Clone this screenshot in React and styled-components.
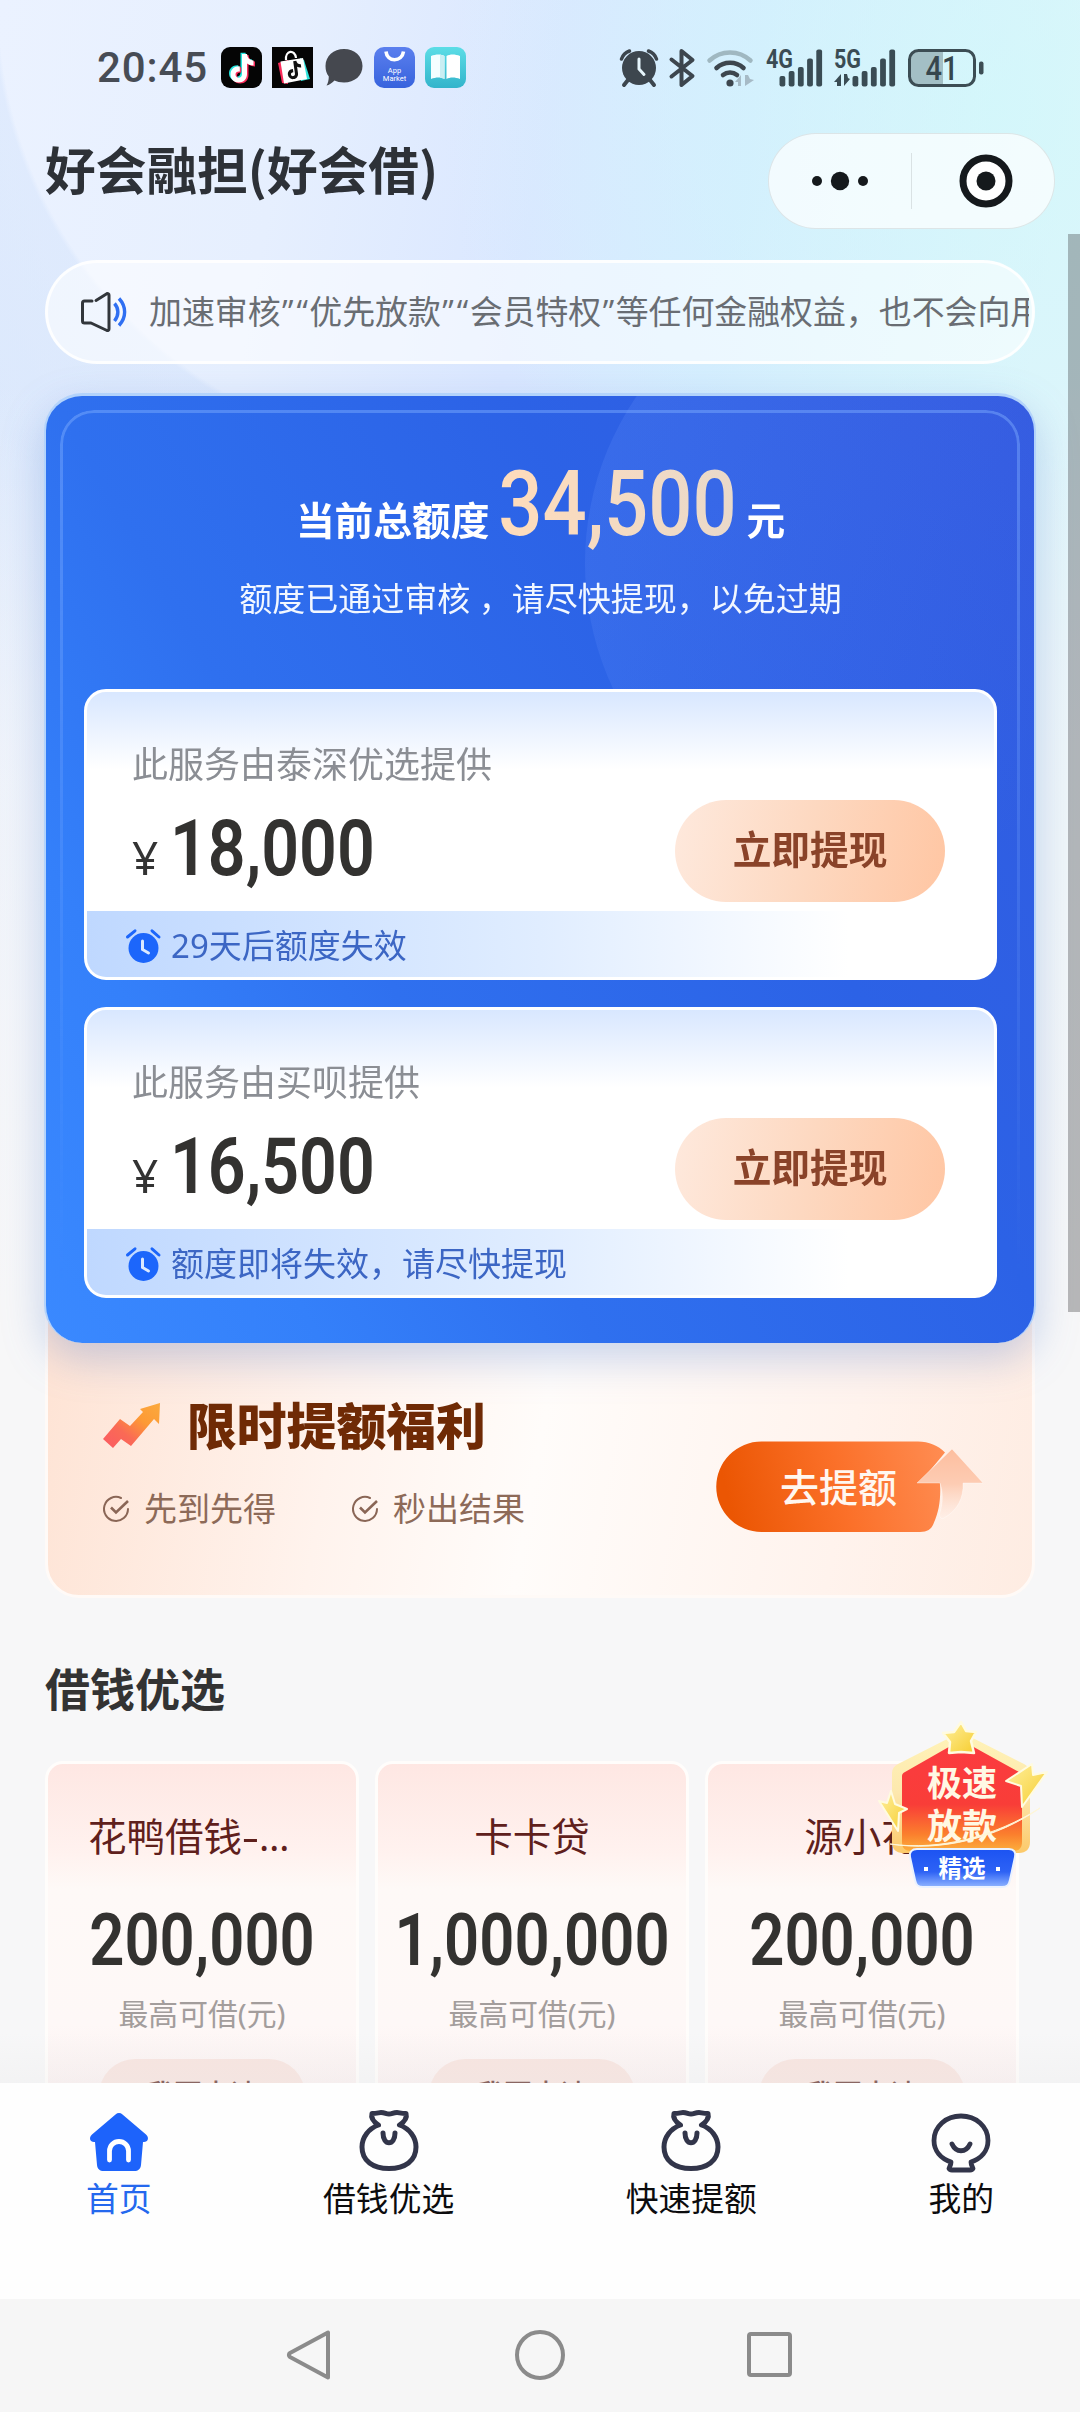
import React from "react";
import styled, { createGlobalStyle } from "styled-components";

const cjk = `"Noto Sans", "Noto Sans CJK SC", sans-serif`;

const GlobalStyle = createGlobalStyle`
  * { box-sizing: border-box; }
  body { margin: 0; font-family: ${cjk}; color: #333; }
  svg { display: block; flex: none; overflow: visible; }
`;

const Screen = styled.div`
  position: relative;
  width: 1080px;
  height: 2412px;
  overflow: hidden;
  display: flex;
  flex-direction: column;
  background:
    linear-gradient(180deg, rgba(247, 247, 248, 0) 0, rgba(247, 247, 248, 0) 380px, rgba(247, 247, 248, 0.6) 760px, #f7f7f8 1300px),
    radial-gradient(circle 900px at 454px -2px, transparent 456px, rgba(202, 221, 250, 0.34) 461px, rgba(206, 224, 250, 0.5) 620px, rgba(206, 224, 250, 0.2) 900px) no-repeat 0 0 / 440px 1000px,
    radial-gradient(circle 560px at 1000px 110px, rgba(206, 249, 250, 0.66), rgba(208, 247, 251, 0.42) 50%, rgba(210, 240, 255, 0)),
    linear-gradient(100deg, #ebf2ff 0, #e6effe 300px, #dae7ff 560px, #d6ebff 760px, #e2f4fb 1080px);
`;

const StatusBar = styled.div`
  flex: none;
  display: flex;
  align-items: center;
  height: 88px;
  padding: 47px 95px 0 97px;
`;

const Clock = styled.div`
  width: 124px;
  font: 500 42px/41px Roboto, sans-serif;
  letter-spacing: 0.9px;
  color: #474c55;
  white-space: nowrap;
`;

const AppIcons = styled.div`
  display: flex;
  align-items: center;
  gap: 10px;
  flex: 1;
`;

const StatusIcons = styled.div`
  display: flex;
  align-items: center;
  gap: 12px;
`;

const Header = styled.header`
  flex: none;
  display: flex;
  justify-content: space-between;
  align-items: center;
  padding: 45px 25px 0 45px;
`;

const Title = styled.h1`
  margin: 0 0 26px;
  font: 700 50.700px/56px "Noto Sans CJK SC", sans-serif;
  color: #2d3137;
`;

const Capsule = styled.div`
  display: flex;
  align-items: center;
  width: 287px;
  height: 96px;
  border: 1px solid rgba(0, 0, 0, 0.09);
  border-radius: 48px;
  background: rgba(255, 255, 255, 0.7);
`;

const CapsulePart = styled.div`
  display: flex;
  align-items: center;
  justify-content: center;
  width: 142px;
  height: 56px;
  & + & {
    width: 143px;
    padding-left: 6px;
    border-left: 1px solid rgba(0, 0, 0, 0.1);
  }
`;

const Content = styled.main`
  flex: 1;
  min-height: 0;
  overflow: hidden;
  padding: 31px 45px 0;
  display: flex;
  flex-direction: column;
`;

const Notice = styled.div`
  flex: none;
  display: flex;
  align-items: center;
  height: 104px;
  padding: 0 3px 0 33px;
  border: 3px solid rgba(255, 255, 255, 0.85);
  border-radius: 52px;
  background: rgba(255, 255, 255, 0.55);
`;

const NoticeText = styled.div`
  flex: 1;
  margin-left: 22px;
  overflow: hidden;
  white-space: nowrap;
  font-size: 32.9px;
  line-height: 48px;
  color: #696d73;
`;

const Quote = styled.span`
  display: inline-block;
  width: 14.4px;
  text-align: center;
  font-family: "Open Sans", sans-serif;
`;

const QuotaCard = styled.section`
  flex: none;
  position: relative;
  z-index: 1;
  height: 950px;
  margin-top: 29px;
  margin-right: -1px;
  margin-left: -1px;
  padding: 64px 37px 0 38px;
  border: solid #b3d3fb;
  border-width: 3px 2px 0;
  border-radius: 38px;
  overflow: hidden;
  background: linear-gradient(60deg, #3a89ff 0, #3480fa 18%, #2f70ef 36%, #2c62e6 66%, #335adf 100%);

  &::before {
    content: "";
    position: absolute;
    left: 539px;
    top: -128px;
    width: 590px;
    height: 590px;
    border-radius: 50%;
    background: linear-gradient(110deg, rgba(100, 146, 250, 0.24), rgba(94, 130, 250, 0.1) 55%, rgba(94, 130, 250, 0) 80%);
  }
`;

const CardShadow = styled.div`
  flex: none;
  position: relative;
  z-index: 1;
  margin-bottom: -60px;
  border-radius: 38px;
  filter: drop-shadow(0 16px 20px rgba(62, 110, 200, 0.28));
`;

const InnerFrame = styled.div`
  position: absolute;
  inset: 14px 14px 60px;
  border: 3px solid rgba(130, 175, 255, 0.45);
  border-bottom: 0;
  border-radius: 34px 34px 0 0;
  mask-image: linear-gradient(180deg, #000, rgba(0, 0, 0, 0.5) 50%, transparent);
`;

const QuotaTotal = styled.div`
  position: relative;
  display: flex;
  align-items: baseline;
  justify-content: center;
  height: 92px;
  font-size: 38.7px;
  line-height: 90px;
  font-weight: 700;
  color: #fff;
`;

const Digits = styled.span`
  display: inline-flex;
  justify-content: ${(p) => p.$align || "center"};
  width: ${(p) => p.$width}px;
  font: ${(p) => p.$weight || 500} ${(p) => p.$size}px / ${(p) => p.$size}px Roboto, sans-serif;
  color: ${(p) => p.$color || "#333230"};
  white-space: nowrap;
  transform: scaleX(${(p) => p.$squeeze});
  transform-origin: ${(p) => p.$origin || "center"};
`;

const TotalAmount = styled(Digits)`
  margin: 0 11px 0 11px;
  & > span {
    background: linear-gradient(90deg, #ffdcbb, #e9d9ca);
    background-clip: text;
    color: transparent;
  }
`;

const QuotaHint = styled.p`
  position: relative;
  margin: 23px 0 0;
  text-align: center;
  white-space: nowrap;
  font-size: 33px;
  line-height: 48px;
  color: #f2f7ff;
`;

const OfferList = styled.div`
  position: relative;
  display: flex;
  flex-direction: column;
  gap: 27px;
  margin-top: 66px;
`;

const Offer = styled.article`
  display: flex;
  flex-direction: column;
  height: 291px;
  border: 3px solid #fff;
  border-radius: 22px;
  overflow: hidden;
  background: linear-gradient(180deg, #d8e7ff 0, #eff5ff 45px, #fff 78px);
`;

const OfferBody = styled.div`
  flex: 1;
  display: flex;
  justify-content: space-between;
  padding: 49px 49px 0 45px;
`;

const Provider = styled.div`
  font-size: 36px;
  line-height: 48px;
  color: #8b8e94;
`;

const Amount = styled.div`
  display: flex;
  align-items: baseline;
  margin-top: 22px;
  font-size: 44px;
  line-height: 77px;
  color: #333;
`;

const Yen = styled.span`
  width: 38px;
  font: 400 46px/77px "Noto Sans", sans-serif;
`;

const CashButton = styled.button`
  width: 270px;
  height: 102px;
  margin-top: 59px;
  padding: 0 0 5px;
  border: 0;
  border-radius: 51px;
  background: linear-gradient(100deg, #fee9dd, #fdd8c0 50%, #ffc6a3);
  font: 700 38.700px/48px ${cjk};
  color: #8a4329;
`;

const Expiry = styled.div`
  display: flex;
  align-items: center;
  gap: 11px;
  height: 66px;
  padding: 4px 0 0 39px;
  background: linear-gradient(90deg, #bfd8ff, #e0edff 50%, #fff 84%);
  font-size: 33px;
  line-height: 48px;
  color: #3c66c4;
`;

const Promo = styled.section`
  flex: none;
  display: flex;
  justify-content: space-between;
  height: 315px;
  padding: 111px 48px 0 53px;
  border: 3px solid #fffaf7;
  border-radius: 34px;
  background: linear-gradient(100deg, #fee3d4 0, #fff3ed 30%, #fffcfa 50%, #fff3ed 80%, #feece2 100%);
`;

const PromoTitle = styled.h2`
  display: flex;
  align-items: center;
  gap: 25px;
  margin: 0;
  padding-left: 1px;
  font-size: 49.8px;
  line-height: 58px;
  font-weight: 800;
  color: #6f2a05;
`;

const Perks = styled.div`
  display: flex;
  gap: 75px;
  margin-top: 30px;
  padding-left: 1px;
`;

const Perk = styled.div`
  display: flex;
  align-items: center;
  gap: 14px;
  font-size: 33px;
  line-height: 48px;
  color: #8d6a58;
`;

const RaiseButton = styled.button`
  position: relative;
  width: 268px;
  height: 92px;
  margin-top: 44px;
  padding: 0;
  border: 0;
  background: none;
`;

const RaiseLabel = styled.span`
  position: absolute;
  left: 64px;
  top: 20px;
  font: 500 39px/48px "Noto Sans CJK SC", sans-serif;
  color: #fff7f0;
  white-space: nowrap;
`;

const SectionTitle = styled.h2`
  flex: none;
  margin: 62px 0 41px;
  font-size: 45px;
  line-height: 60px;
  font-weight: 700;
  color: #333;
`;

const LoanRow = styled.div`
  flex: none;
  display: flex;
  gap: 16px;
`;

const Loan = styled.article`
  flex: none;
  display: flex;
  flex-direction: column;
  align-items: center;
  width: 314px;
  height: 400px;
  padding: 47px 0 0;
  border: 3px solid #fffdfb;
  border-radius: 18px;
  background: linear-gradient(180deg, #fee7e3 0, #fff2ef 90px, #fef9f7 125px, #fef8f7 260px, #faf0f0 330px);
`;

const LoanName = styled.div`
  width: 228px;
  text-align: ${(p) => (p.$long ? "left" : "center")};
  font-size: 38.5px;
  line-height: 50px;
  color: #5f201c;
  white-space: nowrap;
`;

const Dash = styled.span`
  display: inline-block;
  width: 17px;
  text-align: center;
  transform: scaleX(1.4);
`;

const LoanAmount = styled.div`
  display: flex;
  justify-content: center;
  margin-top: 44px;
`;

const LoanNote = styled.div`
  margin-top: 15px;
  font-size: 29.8px;
  line-height: 44px;
  color: #a39d9c;
`;

const LoanButton = styled.button`
  width: 206px;
  height: 72px;
  margin-top: 23px;
  padding: 0 0 2px;
  border: 0;
  border-radius: 36px;
  background: #f8e4df;
  font: 500 28px/40px ${cjk};
  color: #6b3b36;
`;

const TabBar = styled.nav`
  flex: none;
  display: flex;
  justify-content: space-between;
  height: 216px;
  padding: 26px 86px 0;
  background: #fefefe;
`;

const Tab = styled.div`
  display: flex;
  flex-direction: column;
  align-items: center;
  gap: 1px;
  font-size: 32.800px;
  line-height: 50px;
  color: ${(p) => (p.$active ? "#2468ee" : "#0c0c0e")};
`;

const NavBar = styled.div`
  flex: none;
  display: flex;
  justify-content: center;
  align-items: center;
  gap: 179px;
  height: 113px;
  padding-bottom: 1px;
  background: #f6f6f6;
`;

const Scrollbar = styled.div`
  position: absolute;
  right: 0;
  top: 234px;
  width: 12px;
  height: 1078px;
  background: rgba(60, 60, 62, 0.34);
`;

const Fade = styled.div`
  position: absolute;
  left: 0;
  bottom: 329px;
  width: 100%;
  height: 50px;
  background: linear-gradient(180deg, rgba(230, 230, 230, 0), rgba(230, 230, 230, 0.25));
`;

const Sticker = styled.div`
  position: absolute;
  left: 876px;
  top: 1718px;
`;

const TikTokNote = ({ fill, dx = 0, dy = 0 }) => (
  <path
    transform={`translate(${dx} ${dy})`}
    d="M21.5 7h5c.4 4 2.7 6.200 6.500 6.600v5c-2.600 0-4.700-.8-6.500-2v10.400c0 5-3.600 8.500-8.300 8.500S10 32 10 27.500c0-5 4-8.500 9.300-8.100v5.100c-2.500-.4-4.300.9-4.300 3 0 1.900 1.400 3.200 3.200 3.200 2 0 3.300-1.300 3.300-3.700z"
    fill={fill}
  />
);

const TikTokIcon = () => (
  <svg width="41" height="41" viewBox="0 0 41 41">
    <rect width="41" height="41" rx="9" fill="#050505" />
    <TikTokNote fill="#25e6df" dx={-2} dy={-1.200} />
    <TikTokNote fill="#fb2c5b" dx={1} dy={1} />
    <TikTokNote fill="#fff" dx={-0.5} dy={0} />
  </svg>
);

const ShopIcon = () => (
  <svg width="41" height="41" viewBox="0 0 41 41">
    <rect width="41" height="41" fill="#050505" />
    <path d="M6 16l10-3v24l-6-1z" fill="#fb2c5b" />
    <path d="M28 11l4 2 6 19-9 2z" fill="#2fe3dc" />
    <path d="M8.500 14.500L31 11l4 21-23 4.500z" fill="#fff" />
    <path d="M14 13c-1-10 9-11 10-2" fill="none" stroke="#fff" strokeWidth="2.200" />
    <g transform="translate(9 10) scale(.62) rotate(-8 20 20)">
      <TikTokNote fill="#111" />
    </g>
  </svg>
);

const BubbleIcon = () => (
  <svg width="41" height="41" viewBox="0 0 41 41">
    <path d="M21 2c10.500 0 18.500 7.200 18.500 17S31.500 35.500 21 35.500c-4 0-7-.7-9.500-2C9 36 6 38.300 3.500 38.500c1.500-2 2.300-5.500 2.300-9C3.500 26.500 2.500 23 2.500 19 2.500 9.200 10.500 2 21 2z" fill="#45484f" />
  </svg>
);

const MarketIcon = () => (
  <svg width="41" height="41" viewBox="0 0 41 41">
    <defs>
      <linearGradient id="market" x1="0" y1="0" x2="0" y2="1">
        <stop offset="0" stopColor="#5b7fee" />
        <stop offset="1" stopColor="#3763dd" />
      </linearGradient>
    </defs>
    <rect width="41" height="41" rx="10" fill="url(#market)" />
    <path d="M12 4.500c1 11 16 11 17.500 0" fill="none" stroke="#fff" strokeWidth="3.600" />
    <g fill="#fff" fontFamily="Roboto, sans-serif" fontSize="7.500" textAnchor="middle">
      <text x="20.500" y="26">App</text>
      <text x="20.500" y="34">Market</text>
    </g>
  </svg>
);

const BookIcon = () => (
  <svg width="41" height="41" viewBox="0 0 41 41">
    <defs>
      <linearGradient id="book" x1="0" y1="0" x2="0" y2="1">
        <stop offset="0" stopColor="#5cdde6" />
        <stop offset="1" stopColor="#33b4cb" />
      </linearGradient>
    </defs>
    <rect width="41" height="41" rx="9" fill="url(#book)" />
    <path d="M6 9c5-2 10-2 13.500 0v23C16 30 11 30 6 32z" fill="#f4feff" />
    <path d="M35 9c-5-2-10-2-13.500 0v23c3.500-2 8.500-2 13.500 0z" fill="#fff" />
    <path d="M15 7.500l4.500 1.500v23L15 30.500z" fill="#c9eef3" />
  </svg>
);

const AlarmStatus = () => (
  <svg width="38" height="38" viewBox="0 0 38 38">
    <circle cx="19" cy="19" r="17" fill="#3d464e" />
    <path d="M1.500 10A13 13 0 0 1 9.500 2M36.500 10A13 13 0 0 0 28.500 2" stroke="#3d464e" strokeWidth="3.500" fill="none" strokeLinecap="round" />
    <path d="M8 31l-4 5M30 31l4 5" stroke="#3d464e" strokeWidth="4" strokeLinecap="round" />
    <path d="M19 10v10l5 5.500" stroke="#e6f5fc" strokeWidth="3" fill="none" strokeLinecap="round" />
  </svg>
);

const BluetoothStatus = () => (
  <svg width="25" height="38" viewBox="1.500 0 25 38">
    <path d="M3 10.500L24 27 13 36V2l11 9L3 27.500" fill="none" stroke="#3d464e" strokeWidth="4" strokeLinejoin="round" strokeLinecap="round" />
  </svg>
);

const WifiStatus = () => (
  <svg width="47" height="38" viewBox="0 0 47 38">
    <path d="M2.500 11.500a30 30 0 0 1 41 0" fill="none" stroke="#a0b8c1" strokeWidth="4.500" strokeLinecap="round" />
    <path d="M9.500 19a20 20 0 0 1 27 0" fill="none" stroke="#3d464e" strokeWidth="4.600" strokeLinecap="round" />
    <path d="M16 26a11 11 0 0 1 14 0" fill="none" stroke="#3d464e" strokeWidth="4.600" strokeLinecap="round" />
    <circle cx="23" cy="34" r="3.600" fill="#3d464e" />
    <path d="M34 37V26l-6 7h3v4zM38 26v11l9-6-4-1-2-4z" fill="#a6bac6" />
  </svg>
);

const SignalStatus = ({ label, data }) => (
  <svg width={data ? 62 : 56} height="38" viewBox={data ? "0 0 62 38" : "0 0 56 38"}>
    <text x="0" y="19" fontFamily="Roboto, sans-serif" fontWeight="700" fontSize="25.500" textLength="27" lengthAdjust="spacingAndGlyphs" fill="#3a4c54">{label}</text>
    {[27, 22, 18, 9.5, 0.5].map((y, i) => (
      <rect key={i} x={(data ? 18.5 : 13.5) + i * 9.2} y={y} width="5.800" height={37.5 - y} rx="2" fill="#3a4c54" />
    ))}
    {data && <path d="M7 37V25l-7 8h3v4zM10 25v12l6-7-2-1-1-4z" fill="#3a4c54" />}
  </svg>
);

const BatteryStatus = () => (
  <svg width="77" height="38" viewBox="0 0 77 38">
    <path d="M10 2h25v34H10a8 8 0 0 1-8-8V10a8 8 0 0 1 8-8z" fill="#a3bfc5" />
    <rect x="1.500" y="1.500" width="65" height="35" rx="9" fill="none" stroke="#3c4d54" strokeWidth="3" />
    <rect x="71" y="12.500" width="4.500" height="13" rx="2" fill="#3c4d54" />
    <text x="34" y="31" textAnchor="middle" fontFamily="Roboto, sans-serif" fontSize="33" fontWeight="500" textLength="33" lengthAdjust="spacingAndGlyphs" fill="#36464d">41</text>
  </svg>
);

const SpeakerIcon = () => (
  <svg width="46" height="40" viewBox="0 0 46 40">
    <path d="M11 9H3.500a2 2 0 0 0-2 2v18a2 2 0 0 0 2 2H10l16 7.500a1.500 1.500 0 0 0 2-1.400V3a1.500 1.500 0 0 0-2.200-1.300L15 8.500" fill="none" stroke="#32363b" strokeWidth="3" strokeLinecap="round" strokeLinejoin="round" />
    <path d="M33.500 11.500c4.500 5 4.500 12 0 17.500M38 6.500c7.500 8 7.500 19 0 27" fill="none" stroke="#2f6ff2" strokeWidth="3.400" />
  </svg>
);

const ExpiryClock = () => (
  <svg width="34" height="34" viewBox="0 0 34 34">
    <circle cx="17.500" cy="19" r="15" fill="#1c66fb" />
    <path d="M1.500 8L9 1.800M33 8L26 1.800" stroke="#1c66fb" strokeWidth="3" strokeLinecap="round" />
    <path d="M16.500 12v8.500l6 3.500" stroke="#dbe9ff" strokeWidth="3" fill="none" strokeLinecap="round" />
  </svg>
);

const TrendIcon = () => (
  <svg width="60" height="50" viewBox="0 0 60 50">
    <defs>
      <linearGradient id="trend" x1="0" y1="1" x2="1" y2="0">
        <stop offset="0" stopColor="#fb5a64" />
        <stop offset=".35" stopColor="#fa6a55" />
        <stop offset=".65" stopColor="#fd9a35" />
        <stop offset="1" stopColor="#fbaa3e" />
      </linearGradient>
    </defs>
    <path d="M1 38l17-20 10 7 13-14-3-3 20-6-1 21-5-5-23 27-10-7-8 9z" fill="url(#trend)" />
  </svg>
);

const CheckIcon = () => (
  <svg width="28" height="28" viewBox="0 0 28 28">
    <path d="M19 3A12 12 0 1 0 26 14" fill="none" stroke="#8a6656" strokeWidth="2" strokeLinecap="round" />
    <path d="M9 12.500l5 5L26 6" fill="none" stroke="#8a6656" strokeWidth="2.600" />
  </svg>
);

const RaiseShape = () => (
  <svg width="268" height="92" viewBox="0 0 268 92">
    <defs>
      <linearGradient id="raise" x1="0" y1=".1" x2="1" y2="0">
        <stop offset="0" stopColor="#eb5603" />
        <stop offset=".5" stopColor="#fb7029" />
        <stop offset="1" stopColor="#ff8d53" />
      </linearGradient>
      <linearGradient id="lift" x1="0" y1="0" x2="0" y2="1">
        <stop offset="0" stopColor="#fdbe9f" />
        <stop offset=".5" stopColor="#fdccb3" />
        <stop offset="1" stopColor="#feeee6" stopOpacity=".6" />
      </linearGradient>
    </defs>
    <path d="M45.500.5H202c11 0 20 4 27 11l-25 30h20c1 16-1 29-6 40-2 6-6 9.500-14 9.500H45.500a45 45 0 0 1 0-90.500z" fill="url(#raise)" />
    <path d="M236 8l31 34h-20c1 15-6 28-19 35-3 2-6-2-4-6 3-9 3-20 0-29h-23z" fill="url(#lift)" stroke="#fff" strokeOpacity=".35" />
  </svg>
);

const HomeIcon = () => (
  <svg width="60" height="64" viewBox="0 0 60 64">
    <path d="M26.500 5.500L3 25.500C-.5 28.500 1 33 5 33h1l2 23c.4 4 3 6 6.500 6h31c3.500 0 6-2 6.500-6l2-23h1c4 0 5.500-4.500 2-7.500L33.500 5.500c-2.200-1.900-4.800-1.900-7 0z" fill="#1d63fb" />
    <path d="M20.500 51V42a9.500 9.500 0 0 1 19 0v9" fill="none" stroke="#fff" strokeWidth="4.800" strokeLinecap="round" />
  </svg>
);

const BagIcon = () => (
  <svg width="60" height="64" viewBox="0 0 60 64">
    <path d="M13 4.500c5 0 7-1 9-1 4 0 5 1.500 8 1.500s4-1.500 8-1.500c2 0 4 1 9 1 1.500 5-2 8.500-6.500 11.500C50.500 19.500 57 28.500 57 38c0 14-11 21.500-27 21.500S3 52 3 38c0-9.500 6.500-18.500 16.500-22C15 13 11.500 9.500 13 4.500z" fill="none" stroke="#32354a" strokeWidth="5" strokeLinejoin="round" />
    <path d="M24 24c0 13 12 13 12 0" fill="none" stroke="#32354a" strokeWidth="5" strokeLinecap="round" />
  </svg>
);

const MeIcon = () => (
  <svg width="60" height="64" viewBox="0 0 60 64">
    <path d="M20 53C10 49.500 3 42 3 31.500 3 17.500 15 7 30 7s27 10.500 27 24.500C57 42 50 49.500 40 53c0 3 1.500 4.500 2 6.500-.5 1.500-1.500 1.500-3 1.500H21c-1.500 0-2.500 0-3-1.500.5-2 2-3.500 2-6.500z" fill="none" stroke="#32354a" strokeWidth="4.800" strokeLinejoin="round" />
    <path d="M21 35c4 9 14 9 18 0" fill="none" stroke="#32354a" strokeWidth="4.800" strokeLinecap="round" />
  </svg>
);

const StickerArt = () => (
  <svg width="172" height="174" viewBox="0 0 172 174">
    <defs>
      <linearGradient id="gold" x1="0" y1="0" x2="0" y2="1">
        <stop offset="0" stopColor="#fff3b8" />
        <stop offset=".5" stopColor="#fde8ae" />
        <stop offset="1" stopColor="#fcc96a" />
      </linearGradient>
      <linearGradient id="red" x1="0" y1="0" x2="0" y2="1">
        <stop offset="0" stopColor="#fb3b41" />
        <stop offset=".58" stopColor="#f93d38" />
        <stop offset=".85" stopColor="#fb7f2d" />
        <stop offset="1" stopColor="#fcae3c" />
      </linearGradient>
      <linearGradient id="blue" x1="0" y1="0" x2="0" y2="1">
        <stop offset="0" stopColor="#1c53f2" />
        <stop offset=".6" stopColor="#2d62f5" />
        <stop offset="1" stopColor="#8fb4ff" />
      </linearGradient>
      <linearGradient id="star" x1="0" y1="0" x2="1" y2="1">
        <stop offset="0" stopColor="#fff0a0" />
        <stop offset="1" stopColor="#f6cd2e" />
      </linearGradient>
    </defs>
    <path d="M85 14l63 32c4 2 6 5 6 9v69c0 7-4 11-11 11H27c-7 0-11-4-11-11V55c0-4 2-7 6-9z" fill="url(#gold)" />
    <path d="M85 22l58 32c2 1 3 2 3 4v66c0 6-3 9-9 9H35c-6 0-9-3-9-9V58c0-2 1-3 3-4z" fill="url(#red)" />
    <path d="M85 4l5 9 10 1-5 9 3 12-13-1-12 1 1-11-7-9 11-1z" fill="url(#star)" stroke="#fffbe0" strokeWidth="2.500" strokeLinejoin="round" />
    <path d="M156 46l1 11 14-3-25 35-1-21-15-5z" fill="url(#star)" stroke="#fffbe0" strokeWidth="2" strokeLinejoin="round" />
    <path d="M3 83l8 2 4-12 4 13 12 5-8 4-1 18z" fill="url(#star)" stroke="#fffbe0" strokeWidth="2" strokeLinejoin="round" />
    <g fill="#fff8e4" fontFamily="'Noto Sans CJK SC', sans-serif" fontWeight="700" textAnchor="middle">
      <text x="86" y="78" fontSize="35">极速</text>
      <text x="86" y="121" fontSize="35">放款</text>
    </g>
    <path d="M14 126c50 7 106-8 150-36-43 30-98 44-150 36z" fill="#fff6d8" stroke="#fff6d8" strokeWidth="1" />
    <path d="M41 131h92c5 0 7 3 6 8l-5 23c-1 5-3 7-8 7H47c-5 0-7-2-8-7l-5-23c-1-5 2-8 7-8z" fill="url(#blue)" stroke="#eaf2ff" strokeWidth="2" />
    <text x="86" y="159" fontSize="23.500" fill="#fff" fontFamily="'Noto Sans CJK SC', sans-serif" fontWeight="700" textAnchor="middle">精选</text>
    <rect x="48" y="149" width="4" height="4" fill="#fff" />
    <rect x="120" y="149" width="4" height="4" fill="#fff" />
  </svg>
);

const notice = "加速审核”“优先放款”“会员特权”等任何金融权益，也不会向用户";

const offers = [
  { provider: "此服务由泰深优选提供", amount: "18,000", expiry: "29天后额度失效" },
  { provider: "此服务由买呗提供", amount: "16,500", expiry: "额度即将失效，请尽快提现" },
];

const loans = [
  { name: <>花鸭借钱<Dash>-</Dash>…</>, amount: "200,000", long: true },
  { name: "卡卡贷", amount: "1,000,000" },
  { name: "源小花", amount: "200,000" },
];

const tabs = [
  { label: "首页", Icon: HomeIcon, active: true },
  { label: "借钱优选", Icon: BagIcon },
  { label: "快速提额", Icon: BagIcon },
  { label: "我的", Icon: MeIcon },
];

export default function App() {
  return (
    <>
      <GlobalStyle />
      <Screen>
        <StatusBar>
          <Clock>20:45</Clock>
          <AppIcons>
            <TikTokIcon />
            <ShopIcon />
            <BubbleIcon />
            <MarketIcon />
            <BookIcon />
          </AppIcons>
          <StatusIcons>
            <AlarmStatus />
            <BluetoothStatus />
            <WifiStatus />
            <SignalStatus label="4G" />
            <SignalStatus label="5G" data />
            <BatteryStatus />
          </StatusIcons>
        </StatusBar>

        <Header>
          <Title>好会融担(好会借)</Title>
          <Capsule>
            <CapsulePart>
              <svg width="58" height="56" viewBox="0 0 58 56" fill="#15191c">
                <circle cx="6" cy="28" r="5" />
                <circle cx="29" cy="28" r="9.200" />
                <circle cx="52" cy="28" r="5" />
              </svg>
            </CapsulePart>
            <CapsulePart>
              <svg width="56" height="56" viewBox="0 0 56 56">
                <circle cx="28" cy="28" r="23" fill="#fff" stroke="#15191c" strokeWidth="7" />
                <circle cx="28" cy="28" r="9.500" fill="#15191c" />
              </svg>
            </CapsulePart>
          </Capsule>
        </Header>

        <Content>
          <Notice>
            <SpeakerIcon />
            <NoticeText>
              {notice.split(/([“”])/).map((part, i) =>
                part === "“" || part === "”" ? <Quote key={i}>{part}</Quote> : part
              )}
            </NoticeText>
          </Notice>

          <CardShadow>
            <QuotaCard>
              <InnerFrame />
              <QuotaTotal>
                当前总额度
                <TotalAmount $size={90} $width={235} $squeeze={0.865}>
                  <span>34,500</span>
                </TotalAmount>
                元
              </QuotaTotal>
              <QuotaHint>额度已通过审核 ，请尽快提现，以免过期</QuotaHint>
              <OfferList>
                {offers.map((o) => (
                  <Offer key={o.provider}>
                    <OfferBody>
                      <div>
                        <Provider>{o.provider}</Provider>
                        <Amount>
                          <Yen>¥</Yen>
                          <Digits $size={77} $width={200} $weight={600} $align="flex-start" $origin="left" $squeeze={0.86}>
                            {o.amount}
                          </Digits>
                        </Amount>
                      </div>
                      <CashButton>立即提现</CashButton>
                    </OfferBody>
                    <Expiry>
                      <ExpiryClock />
                      {o.expiry}
                    </Expiry>
                  </Offer>
                ))}
              </OfferList>
            </QuotaCard>
          </CardShadow>

          <Promo>
            <div>
              <PromoTitle>
                <TrendIcon />
                限时提额福利
              </PromoTitle>
              <Perks>
                <Perk><CheckIcon />先到先得</Perk>
                <Perk><CheckIcon />秒出结果</Perk>
              </Perks>
            </div>
            <RaiseButton>
              <RaiseShape />
              <RaiseLabel>去提额</RaiseLabel>
            </RaiseButton>
          </Promo>

          <SectionTitle>借钱优选</SectionTitle>
          <LoanRow>
            {loans.map((l, i) => (
              <Loan key={i}>
                <LoanName $long={l.long}>{l.name}</LoanName>
                <LoanAmount>
                  <Digits $size={72} $width={280} $weight={600} $squeeze={0.855}>
                    {l.amount}
                  </Digits>
                </LoanAmount>
                <LoanNote>最高可借(元)</LoanNote>
                <LoanButton>我要申请</LoanButton>
              </Loan>
            ))}
          </LoanRow>
        </Content>

        <TabBar>
          {tabs.map(({ label, Icon, active }) => (
            <Tab key={label} $active={active}>
              <Icon />
              {label}
            </Tab>
          ))}
        </TabBar>

        <NavBar>
          <svg width="48" height="52" viewBox="0 0 48 52">
            <path d="M41 3.500v45L3 28c-1.500-1-1.500-3 0-4z" fill="none" stroke="#8b8b8b" strokeWidth="4" strokeLinejoin="round" />
          </svg>
          <svg width="52" height="52" viewBox="0 0 52 52">
            <circle cx="26" cy="26" r="23" fill="none" stroke="#8b8b8b" strokeWidth="4" />
          </svg>
          <svg width="48" height="52" viewBox="0 0 48 52">
            <rect x="4" y="5" width="41" height="41" rx="2" fill="none" stroke="#8b8b8b" strokeWidth="4" />
          </svg>
        </NavBar>

        <Fade />
        <Sticker>
          <StickerArt />
        </Sticker>
        <Scrollbar />
      </Screen>
    </>
  );
}
